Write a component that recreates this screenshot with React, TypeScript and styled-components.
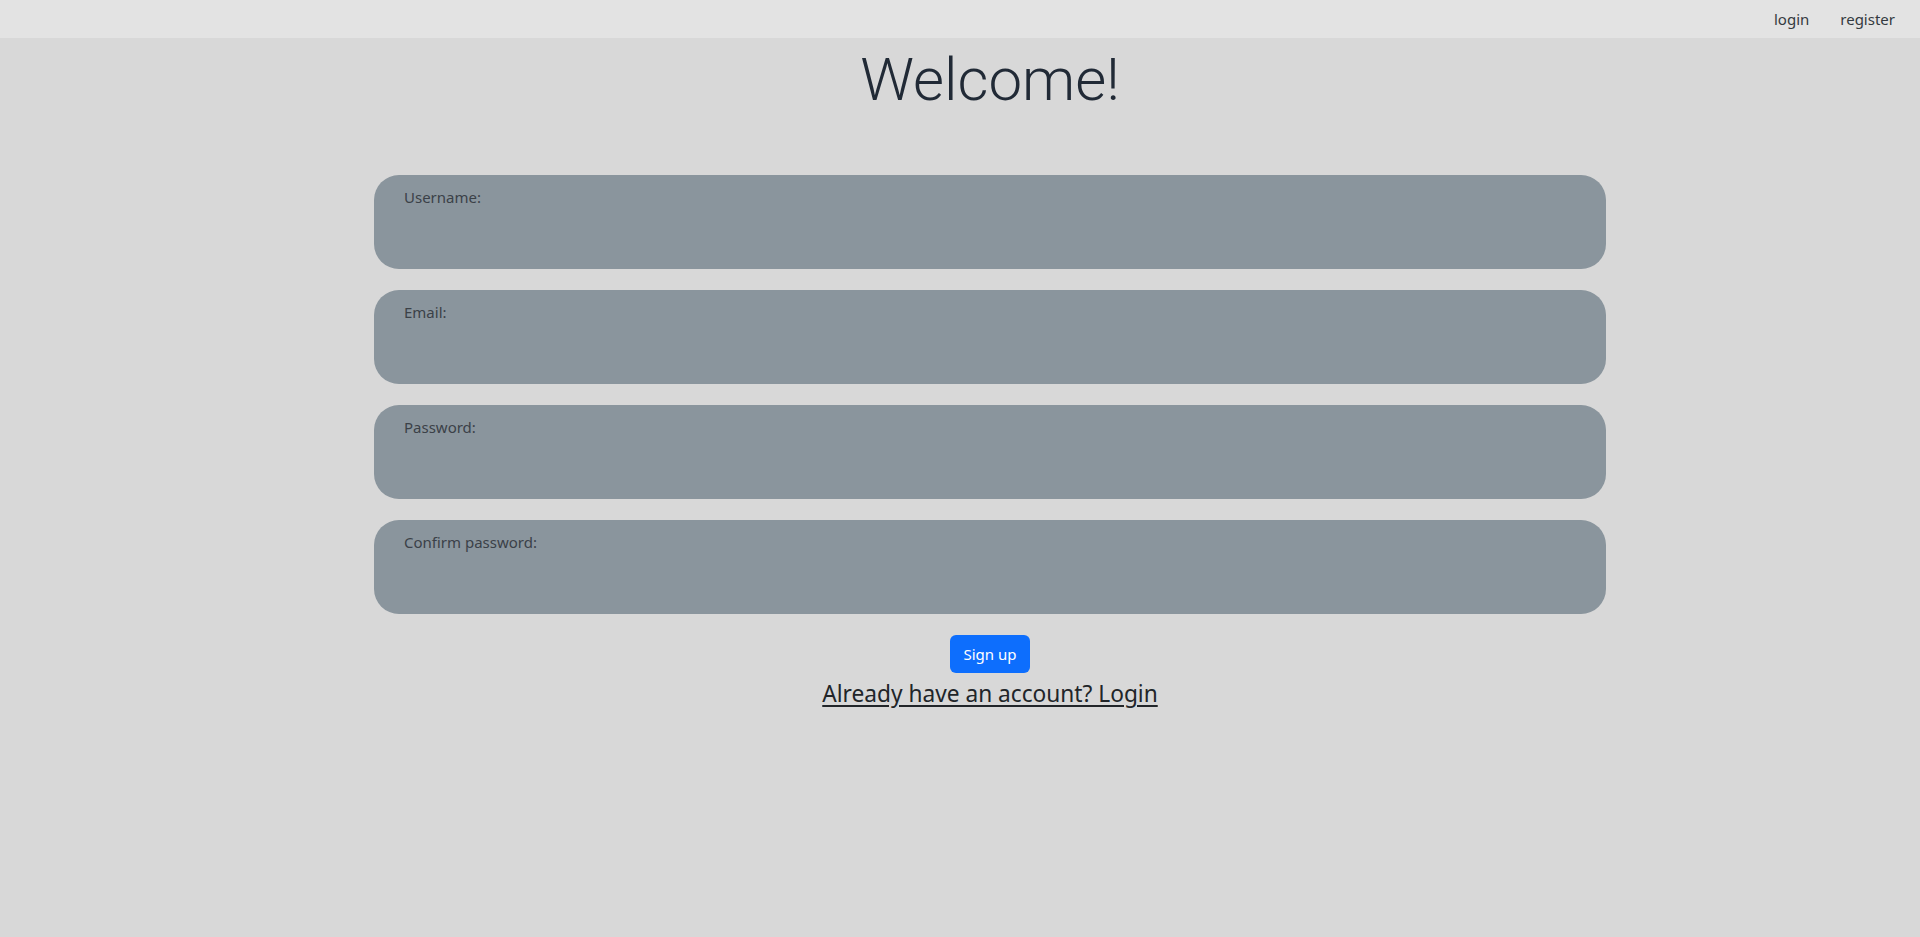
import React from "react";
import styled, { createGlobalStyle } from "styled-components";

const Global = createGlobalStyle`
  html, body { margin: 0; padding: 0; }
  body {
    background: #d8d8d8;
    font-family: "Noto Sans", "Open Sans", sans-serif;
    color: #212529;
    min-height: 937px;
  }
`;

const TopBar = styled.nav`
  height: 38px;
  background: #e3e3e3;
  display: flex;
  justify-content: flex-end;
  align-items: center;
  gap: 31px;
  padding-right: 25px;
`;

const NavLink = styled.a`
  font-size: 15px;
  color: #343a40;
  text-decoration: none;
  line-height: 1;
`;

const Main = styled.main`
  display: flex;
  flex-direction: column;
  align-items: center;
  padding-left: 60px;
`;

const Title = styled.h1`
  margin: 7px 0 0;
  font-family: Roboto, sans-serif;
  font-weight: 300;
  font-size: 60px;
  line-height: 70px;
  color: #212a36;
`;

const Form = styled.form`
  width: 1232px;
  margin-top: 60px;
  display: flex;
  flex-direction: column;
  align-items: center;
  gap: 21px;
`;

const Field = styled.div`
  width: 100%;
  height: 94px;
  box-sizing: border-box;
  background: #8a959d;
  border-radius: 25px;
  padding: 10px 30px;
`;

const Label = styled.label`
  display: block;
  font-size: 15px;
  line-height: 24px;
  color: #3b4148;
`;

const Button = styled.button`
  background: #0d6efd;
  color: #fff;
  border: none;
  border-radius: 6px;
  width: 80px;
  height: 38px;
  font-family: "Noto Sans", sans-serif;
  font-size: 15px;
  padding: 0;
`;

const LoginLink = styled.a`
  margin-top: 5px;
  font-size: 22.7px;
  line-height: 32px;
  color: #212529;
  text-decoration: underline;
  text-underline-offset: 3px;
`;

const fields = ["Username:", "Email:", "Password:", "Confirm password:"];

export default function App() {
  return (
    <>
      <Global />
      <TopBar>
        <NavLink href="#">login</NavLink>
        <NavLink href="#">register</NavLink>
      </TopBar>
      <Main>
        <Title>Welcome!</Title>
        <Form onSubmit={(e) => e.preventDefault()}>
          {fields.map((f) => (
            <Field key={f}>
              <Label>{f}</Label>
            </Field>
          ))}
          <Button type="submit">Sign up</Button>
        </Form>
        <LoginLink href="#">Already have an account? Login</LoginLink>
      </Main>
    </>
  );
}
